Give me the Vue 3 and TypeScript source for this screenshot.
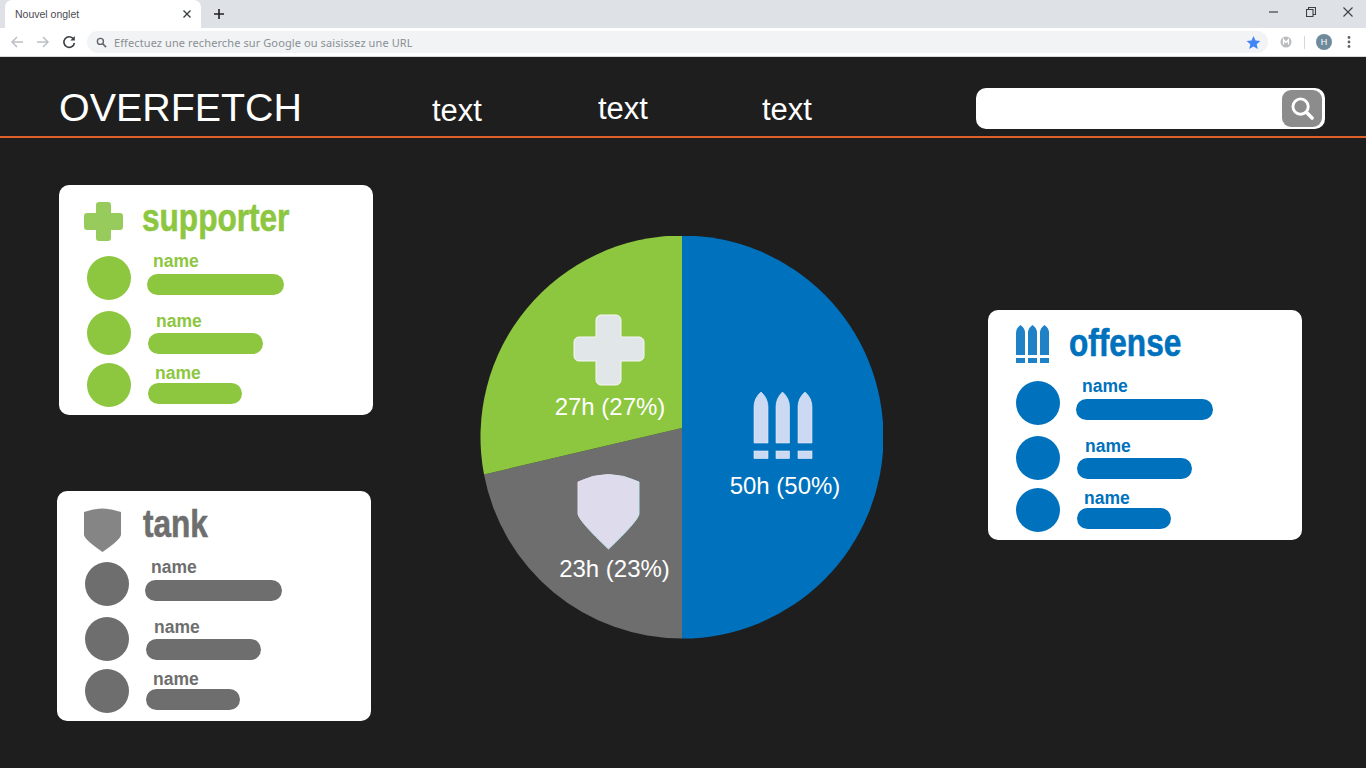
<script setup lang="ts">
interface Player {
  indent: number
  nameTop: number
  barGap: number
  barLeft: number
  barWidth: number
  rowGap: number
}

interface Role {
  key: string
  title: string
}

const players: Player[] = [
  { indent: 6, nameTop: -5, barGap: 3, barLeft: 16, barWidth: 137, rowGap: 0 },
  { indent: 8, nameTop: 0, barGap: 2, barLeft: 17, barWidth: 115, rowGap: 11 },
  { indent: 7, nameTop: 0, barGap: 0, barLeft: 17, barWidth: 94, rowGap: 8 },
]

const leftRoles: Role[] = [
  { key: 'supporter', title: 'supporter' },
  { key: 'tank', title: 'tank' },
]
const rightRole: Role = { key: 'offense', title: 'offense' }
const navItems = [
  { label: 'text', cls: 'nav-a' },
  { label: 'text', cls: 'nav-b' },
  { label: 'text', cls: 'nav-c' },
]
</script>

<template>
  <div class="page">
    <div class="tabstrip">
      <div class="tab">
        <span class="tab-title">Nouvel onglet</span>
        <svg class="tab-close" viewBox="0 0 10 10" width="10" height="10"><path d="M1.5 1.5l7 7M8.5 1.5l-7 7" stroke="#3c4043" stroke-width="1.4" /></svg>
      </div>
      <svg class="new-tab" viewBox="0 0 12 12" width="12" height="12"><path d="M6 1v10M1 6h10" stroke="#202124" stroke-width="1.6" /></svg>
      <div class="win-controls">
        <svg viewBox="0 0 10 10" width="10" height="10"><path d="M0 5h9" stroke="#3c4043" stroke-width="1.2" /></svg>
        <svg viewBox="0 0 10 10" width="10" height="10"><path d="M.5 2.5h6.5v7H.5zM2.5 2.5V.5h7v7H7" fill="none" stroke="#3c4043" stroke-width="1.1" /></svg>
        <svg viewBox="0 0 10 10" width="10" height="10"><path d="M.5.5l9 9M9.500.5l-9 9" stroke="#3c4043" stroke-width="1.1" /></svg>
      </div>
    </div>
    <div class="toolbar">
      <svg class="tool" viewBox="0 0 14 14" width="14" height="14"><path d="M13 7H2M7 2L2 7l5 5" fill="none" stroke="#bcc0c4" stroke-width="1.5" /></svg>
      <svg class="tool" viewBox="0 0 14 14" width="14" height="14"><path d="M1 7h11M7 2l5 5-5 5" fill="none" stroke="#bcc0c4" stroke-width="1.5" /></svg>
      <svg class="tool" viewBox="0 0 14 14" width="14" height="14"><path d="M11.500 4A5.300 5.300 0 1 0 12.400 8" fill="none" stroke="#3c4043" stroke-width="1.6" /><path d="M12.800 1v4.500H8.300z" fill="#3c4043" /></svg>
      <div class="omnibox">
        <svg viewBox="0 0 12 12" width="11" height="11"><circle cx="4.800" cy="4.800" r="3.300" fill="none" stroke="#5f6368" stroke-width="1.500" /><path d="M7.300 7.300l3.700 3.700" stroke="#5f6368" stroke-width="1.700" /></svg>
        <span class="omni-text">Effectuez une recherche sur Google ou saisissez une URL</span>
        <svg class="star" viewBox="0 0 24 24" width="15" height="15"><path d="M12 1.500l3.200 7.200 7.800.8-5.900 5.200 1.700 7.700L12 18.400l-6.800 4 1.700-7.700L1 9.500l7.800-.8z" fill="#4285f4" /></svg>
      </div>
      <div class="ext-icon">
        <svg viewBox="0 0 12 12" width="12" height="12"><circle cx="6" cy="6" r="5.500" fill="#b9bbbd" /><path d="M3.500 8.500v-5L6 6.500l2.500-3v5" fill="none" stroke="#fff" stroke-width="1.300" /></svg>
      </div>
      <span class="divider"></span>
      <span class="avatar">H</span>
      <svg class="dots" viewBox="0 0 4 14" width="4" height="14"><circle cx="2" cy="2.500" r="1.400" fill="#5f6368" /><circle cx="2" cy="7" r="1.400" fill="#5f6368" /><circle cx="2" cy="11.500" r="1.400" fill="#5f6368" /></svg>
    </div>

    <header class="site-header">
      <div class="logo">OVERFETCH</div>
      <nav class="nav">
        <a v-for="item in navItems" :key="item.cls" :class="['nav-link', item.cls]">{{ item.label }}</a>
      </nav>
      <div class="search">
        <button class="search-btn" type="button">
          <svg viewBox="0 0 24 24" width="23" height="23"><circle cx="10" cy="10" r="8" fill="none" stroke="#fff" stroke-width="3" /><path d="M16 16l6 6" stroke="#fff" stroke-width="3.600" stroke-linecap="round" /></svg>
        </button>
      </div>
    </header>

    <main class="board">
      <section class="col-left">
        <article v-for="role in leftRoles" :key="role.key" :class="['card', role.key]">
          <div class="card-head">
            <svg v-if="role.key === 'supporter'" class="role-icon" viewBox="0 0 39 39" width="39" height="39">
              <path d="M15 0h9a3 3 0 0 1 3 3v8h9a3 3 0 0 1 3 3v11a3 3 0 0 1-3 3h-9v8a3 3 0 0 1-3 3h-9a3 3 0 0 1-3-3v-8H3a3 3 0 0 1-3-3V14a3 3 0 0 1 3-3h9V3a3 3 0 0 1 3-3z" fill="#97cc5c" />
            </svg>
            <svg v-else class="role-icon" viewBox="0 0 37 45" width="37" height="45">
              <path d="M0 5Q18-2 37 5V28Q36 33 18.500 45 1 33 0 28z" fill="#858585" />
            </svg>
            <h2 class="card-title">{{ role.title }}</h2>
          </div>
          <div v-for="(p, i) in players" :key="i" class="player" :style="{ marginTop: p.rowGap + 'px' }">
            <span class="dot"></span>
            <div class="player-info" :style="{ marginLeft: p.barLeft + 'px' }">
              <div class="name" :style="{ marginTop: p.nameTop + 'px', marginLeft: p.indent + 'px' }">name</div>
              <div class="bar" :style="{ marginTop: p.barGap + 'px', width: p.barWidth + 'px' }"></div>
            </div>
          </div>
        </article>
      </section>

      <section class="pie-wrap">
        <svg class="pie" viewBox="480 236 403 403" width="403" height="403">
          <defs>
            <linearGradient id="shield-edge" x1="0" y1="0" x2="1" y2="1">
              <stop offset="0" stop-color="#f3dcf3" />
              <stop offset="1" stop-color="#a8ece6" />
            </linearGradient>
          </defs>
          <path d="M682 428L484 474.500A201.500 201.500 0 0 0 682 638.500z" fill="#6e6e6e" />
          <path d="M682 235.500A201.500 201.500 0 0 0 484 474.500L682 428z" fill="#8dc63f" />
          <path d="M682 235.500A201.500 201.500 0 0 1 682 638.500z" fill="#0071bc" />

          <path d="M601 315h15a5 5 0 0 1 5 5v17h18a5 5 0 0 1 5 5v14a5 5 0 0 1-5 5h-18v19a5 5 0 0 1-5 5h-15a5 5 0 0 1-5-5v-19h-17a5 5 0 0 1-5-5v-14a5 5 0 0 1 5-5h17v-17a5 5 0 0 1 5-5z" fill="#e1e6e8" stroke="#f6f8f8" stroke-width="1" />
          <text class="pie-label" x="610" y="415" text-anchor="middle">27h (27%)</text>

          <path d="M578 482Q608 467 639 482V514Q638 521 608.500 549 579 521 578 514z" fill="#dddbec" stroke="url(#shield-edge)" stroke-width="1" />
          <text class="pie-label" x="614.500" y="577" text-anchor="middle">23h (23%)</text>

          <g fill="#ccd9f3" stroke="#e6edfb" stroke-width=".6">
            <path d="M754 443V407Q754 398 761 392 768 398 768 407V443z" />
            <path d="M776 443V407Q776 398 782.500 392 789.500 398 789.500 407V443z" />
            <path d="M798 443V407Q798 398 805 392 812 398 812 407V443z" />
            <rect x="754" y="451" width="14" height="7.500" />
            <rect x="776" y="451" width="13.500" height="7.500" />
            <rect x="798" y="451" width="14" height="7.500" />
          </g>
          <text class="pie-label" x="785" y="494" text-anchor="middle">50h (50%)</text>
        </svg>
      </section>

      <section class="col-right">
        <article :class="['card', rightRole.key]">
          <div class="card-head">
            <svg class="role-icon" viewBox="0 0 33 38" width="33" height="38">
              <g fill="#1f82c6">
                <path d="M0 30V8Q0 3 4.500 0 9 3 9 8V30z" />
                <path d="M12 30V8Q12 3 16.500 0 21 3 21 8V30z" />
                <path d="M24 30V8Q24 3 28.500 0 33 3 33 8V30z" />
                <rect x="0" y="33" width="9" height="5" />
                <rect x="12" y="33" width="9" height="5" />
                <rect x="24" y="33" width="9" height="5" />
              </g>
            </svg>
            <h2 class="card-title">{{ rightRole.title }}</h2>
          </div>
          <div v-for="(p, i) in players" :key="i" class="player" :style="{ marginTop: p.rowGap + 'px' }">
            <span class="dot"></span>
            <div class="player-info" :style="{ marginLeft: p.barLeft + 'px' }">
              <div class="name" :style="{ marginTop: p.nameTop + 'px', marginLeft: p.indent + 'px' }">name</div>
              <div class="bar" :style="{ marginTop: p.barGap + 'px', width: p.barWidth + 'px' }"></div>
            </div>
          </div>
        </article>
      </section>
    </main>
  </div>
</template>

<style>
html,
body {
  margin: 0;
  background: #1e1e1e;
}
</style>

<style scoped>
.page {
  width: 1366px;
  height: 768px;
  overflow: hidden;
  background: #1e1e1e;
  font-family: "Liberation Sans", Arial, sans-serif;
}

.tabstrip {
  height: 28px;
  background: #dee1e6;
  display: flex;
  align-items: flex-end;
  padding-left: 5px;
  box-sizing: border-box;
}

.tab {
  width: 196px;
  height: 28px;
  background: #fff;
  border-radius: 7px 7px 0 0;
  display: flex;
  align-items: center;
  box-sizing: border-box;
  padding: 0 9px 0 10px;
}

.tab-title {
  flex: 1;
  font: 10.500px "Liberation Sans", sans-serif;
  color: #4a4a4f;
}

.new-tab {
  margin: 0 0 8px 12px;
}

.win-controls {
  margin-left: auto;
  align-self: flex-start;
  display: flex;
  gap: 27px;
  padding: 7px 13px 0 0;
}

.toolbar {
  height: 29px;
  background: #fff;
  display: flex;
  align-items: center;
  padding-left: 10px;
  box-sizing: border-box;
  border-bottom: 1px solid #d6d8db;
}

.tool {
  margin-right: 12px;
}

.omnibox {
  width: 1181px;
  height: 22px;
  margin-left: -1px;
  background: #f1f3f4;
  border-radius: 11px;
  display: flex;
  align-items: center;
  padding: 0 7px 0 9px;
  box-sizing: border-box;
}

.omni-text {
  flex: 1;
  margin-left: 7px;
  font: 11px "Noto Sans", "Open Sans", sans-serif;
  letter-spacing: 0.1px;
  color: #8a8f94;
}

.ext-icon {
  display: flex;
  margin-left: 12px;
}

.divider {
  width: 1px;
  height: 13px;
  background: #d5d7da;
  margin-left: 12px;
}

.avatar {
  width: 16px;
  height: 16px;
  margin-left: 11px;
  border-radius: 50%;
  background: #6f8a9b;
  color: #fff;
  font: 9px/16px "Liberation Sans", sans-serif;
  text-align: center;
}

.dots {
  margin-left: 15px;
}

.site-header {
  height: 81px;
  box-sizing: border-box;
  border-bottom: 2px solid #e0602a;
  display: flex;
  align-items: flex-start;
  padding-left: 59px;
}

.logo {
  width: 373px;
  font-size: 39.400px;
  line-height: 46px;
  margin-top: 27px;
  color: #fff;
}

.nav {
  width: 544px;
  display: flex;
}

.nav-link {
  font-size: 31px;
  line-height: 36px;
  color: #fff;
}

.nav-a {
  margin-top: 36px;
}

.nav-b {
  margin: 34px 0 0 116px;
}

.nav-c {
  margin: 35px 0 0 114px;
}

.search {
  width: 349px;
  height: 41px;
  margin-top: 31px;
  background: #fff;
  border-radius: 10px;
  display: flex;
  align-items: center;
  justify-content: flex-end;
  padding-right: 3px;
  box-sizing: border-box;
}

.search-btn {
  width: 40px;
  height: 37px;
  padding: 0;
  border: none;
  border-radius: 9px;
  background: #8c8c8c;
  display: flex;
  align-items: center;
  justify-content: center;
}

.board {
  display: flex;
  align-items: flex-start;
  padding-left: 57px;
}

.col-left {
  width: 316px;
  padding-top: 47px;
  display: flex;
  flex-direction: column;
  gap: 76px;
}

.pie-wrap {
  margin: 98px 0 0 107px;
}

.pie {
  display: block;
}

.pie-label {
  font-size: 24px;
  fill: #fff;
}

.col-right {
  margin: 172px 0 0 105px;
}

.card {
  width: 314px;
  height: 230px;
  box-sizing: border-box;
  background: #fff;
  border-radius: 10px;
  padding-left: 28px;
}

.supporter {
  margin-left: 2px;
  --role: #8dc63f;
}

.tank {
  --role: #6e6e6e;
}

.offense {
  --role: #0071bc;
}

.card-head {
  height: 71px;
  display: flex;
  align-items: flex-start;
  margin-left: -28px;
  box-sizing: border-box;
}

.supporter .card-head {
  padding-left: 25px;
  gap: 19px;
}

.supporter .role-icon {
  margin-top: 17px;
}

.tank .card-head {
  padding-left: 27px;
  gap: 22px;
}

.tank .role-icon {
  margin-top: 16px;
}

.offense .card-head {
  padding-left: 28px;
  gap: 20px;
}

.offense .role-icon {
  margin-top: 15px;
}

.card-title {
  margin: 11px 0 0;
  font-size: 38.500px;
  line-height: 44px;
  font-weight: 700;
  color: var(--role);
  -webkit-text-stroke: 0.6px var(--role);
  transform: scaleX(0.82);
  transform-origin: left center;
}

.player {
  display: flex;
  align-items: flex-start;
  height: 44px;
}

.dot {
  flex: none;
  width: 44px;
  height: 44px;
  border-radius: 50%;
  background: var(--role);
}

.name {
  font-size: 17.500px;
  line-height: 20px;
  font-weight: 700;
  color: var(--role);
}

.bar {
  height: 21px;
  border-radius: 11px;
  background: var(--role);
}
</style>
